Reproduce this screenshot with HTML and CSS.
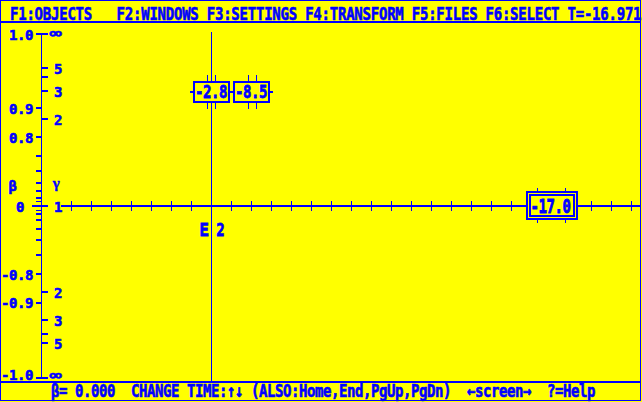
FILE: index.html
```html
<!DOCTYPE html>
<html>
<head>
<meta charset="utf-8">
<link rel="stylesheet" href="styles.css">
</head>
<body>
<div class="screen">
  <header class="menu"><span class="menu-text">F1:OBJECTS   F2:WINDOWS F3:SETTINGS F4:TRANSFORM F5:FILES F6:SELECT T=-16.971</span></header>
  <main class="plot">
    <svg class="canvas" width="639" height="358" viewBox="1 23 639 358" shape-rendering="crispEdges">
      <g class="ink">
        <!-- beta / gamma axis -->
        <rect x="41" y="33" width="1" height="346"/>
        <rect x="36" y="33" width="12" height="2"/>
        <rect x="36" y="377" width="12" height="2"/>
        <!-- beta ticks (left) -->
        <rect x="36" y="107" width="5" height="2"/>
        <rect x="36" y="136" width="5" height="2"/>
        <rect x="36" y="155" width="5" height="2"/>
        <rect x="36" y="170" width="5" height="2"/>
        <rect x="36" y="182" width="5" height="2"/>
        <rect x="36" y="190" width="5" height="2"/>
        <rect x="36" y="197" width="5" height="2"/>
        <rect x="36" y="201" width="5" height="1"/>
        <rect x="36" y="210" width="5" height="1"/>
        <rect x="36" y="213" width="5" height="2"/>
        <rect x="36" y="219" width="5" height="2"/>
        <rect x="36" y="228" width="5" height="2"/>
        <rect x="36" y="239" width="5" height="2"/>
        <rect x="36" y="254" width="5" height="2"/>
        <rect x="36" y="273" width="5" height="2"/>
        <rect x="36" y="302" width="5" height="2"/>
        <!-- gamma ticks (right) -->
        <rect x="42" y="67" width="6" height="2"/>
        <rect x="42" y="76" width="6" height="2"/>
        <rect x="42" y="90" width="6" height="2"/>
        <rect x="42" y="118" width="6" height="2"/>
        <rect x="42" y="291" width="6" height="2"/>
        <rect x="42" y="319" width="6" height="2"/>
        <rect x="42" y="333" width="6" height="2"/>
        <rect x="42" y="342" width="6" height="2"/>
        <!-- x axis -->
        <rect x="32" y="205" width="16" height="2"/>
        <rect x="61" y="205" width="579" height="2"/>
        <path class="ticks" d="M71.5 201V211M91.5 201V211M111.5 201V211M131.5 201V211M151.5 201V211M171.5 201V211M191.5 201V211M211.5 201V211M231.5 201V211M251.5 201V211M271.5 201V211M291.5 201V211M311.5 201V211M331.5 201V211M351.5 201V211M371.5 201V211M391.5 201V211M411.5 201V211M431.5 201V211M451.5 201V211M471.5 201V211M491.5 201V211M511.5 201V211M531.5 201V211M551.5 201V211M571.5 201V211M591.5 201V211M611.5 201V211M631.5 201V211"/>
        <!-- world line -->
        <rect x="211" y="32" width="1" height="349"/>
        <!-- event line & boxes -->
        <rect x="190" y="91" width="83" height="2"/>
        <rect x="207" y="75" width="1" height="6"/>
        <rect x="215" y="75" width="1" height="6"/>
        <rect x="207" y="103" width="1" height="6"/>
        <rect x="215" y="103" width="1" height="6"/>
        <rect x="248" y="75" width="1" height="6"/>
        <rect x="256" y="75" width="1" height="6"/>
        <rect x="248" y="103" width="1" height="6"/>
        <rect x="256" y="103" width="1" height="6"/>
        <rect x="193" y="81" width="37" height="22"/>
        <rect class="bg" x="195" y="83" width="33" height="18"/>
        <rect x="233" y="81" width="37" height="22"/>
        <rect class="bg" x="235" y="83" width="33" height="18"/>
        <rect x="537" y="188" width="1" height="3"/>
        <rect x="565" y="188" width="1" height="3"/>
        <rect x="537" y="220" width="1" height="3"/>
        <rect x="565" y="220" width="1" height="3"/>
        <rect x="526" y="191" width="52" height="29"/>
        <rect class="bg" x="528" y="193" width="48" height="25"/>
        <rect x="529" y="194" width="46" height="23"/>
        <rect class="bg" x="531" y="196" width="42" height="19"/>
      </g>
      <g class="labels">
        <text x="33" y="40" text-anchor="end">1.0</text>
        <text x="33" y="113.5" text-anchor="end">0.9</text>
        <text x="33" y="142.5" text-anchor="end">0.8</text>
        <text x="33" y="279.5" text-anchor="end">-0.8</text>
        <text x="33" y="308" text-anchor="end">-0.9</text>
        <text x="33" y="380" text-anchor="end">-1.0</text>
        <text x="12.5" y="191" text-anchor="middle">β</text>
        <text x="20" y="211.5" text-anchor="middle">0</text>
        <text class="inf" x="55.5" y="38.5" text-anchor="middle">∞</text>
        <text x="58" y="73.5" text-anchor="middle">5</text>
        <text x="58" y="96.5" text-anchor="middle">3</text>
        <text x="58" y="125" text-anchor="middle">2</text>
        <text class="gamma" x="56" y="188" text-anchor="middle">γ</text>
        <text x="58" y="211.5" text-anchor="middle">1</text>
        <text x="58" y="297.5" text-anchor="middle">2</text>
        <text x="58" y="325.5" text-anchor="middle">3</text>
        <text x="58" y="349" text-anchor="middle">5</text>
        <text class="inf" x="55.5" y="380.5" text-anchor="middle">∞</text>
        <text class="tall" x="211" y="97" text-anchor="middle">-2.8</text>
        <text class="tall" x="251" y="97" text-anchor="middle">-8.5</text>
        <text class="tall big" x="550.5" y="210.5" text-anchor="middle">-17.0</text>
        <text class="tall" x="212" y="235" text-anchor="middle"><tspan class="serif">E</tspan> 2</text>
      </g>
    </svg>
  </main>
  <footer class="status"><span class="status-text">β= 0.000  CHANGE TIME:↑↓ (ALSO:Home,End,PgUp,PgDn)  ←screen→  ?=Help</span></footer>
</div>
</body>
</html>
```
FILE: styles.css
```css
html, body {
  margin: 0;
  padding: 0;
  background: #ffff00;
}
body {
  width: 642px;
  height: 402px;
  overflow: hidden;
  font-family: "DejaVu Sans Mono", monospace;
  font-weight: bold;
  color: #0000ff;
}
.screen {
  width: 641px;
  height: 401px;
  box-sizing: border-box;
  border: 1px solid #0000ff;
  display: flex;
  flex-direction: column;
}
.menu {
  flex: none;
  height: 20px;
  min-height: 0;
  border-bottom: 2px solid #0000ff;
  padding-left: 9px;
  display: flex;
  align-items: flex-start;
}
.menu-text {
  display: inline-block;
  white-space: pre;
  font-size: 14px;
  line-height: 28px;
  letter-spacing: -0.23px;
  -webkit-text-stroke: 0.5px #0000ff;
  transform: scaleY(1.25);
  transform-origin: 0 18.85px;
}
.plot {
  flex: 1 1 auto;
  min-height: 0;
}
.canvas {
  display: block;
}
.ink rect, .ink path {
  fill: #0000ff;
}
.ink .bg {
  fill: #ffff00;
}
.ink .ticks {
  fill: none;
  stroke: #0000ff;
  stroke-width: 1;
}
.labels text {
  font-family: "DejaVu Sans Mono", monospace;
  font-weight: bold;
  font-size: 14px;
  letter-spacing: -0.43px;
  fill: #0000ff;
  stroke: #0000ff;
  stroke-width: 0.6px;
  shape-rendering: auto;
}
.labels .inf {
  font-size: 14px;
  stroke-width: 0.5px;
  transform-box: fill-box;
  transform-origin: center;
  transform: scaleX(1.45);
}
.labels .gamma {
  font-family: "Liberation Serif", serif;
  font-size: 15px;
  stroke-width: 0.4px;
}
.labels .serif {
  font-family: "Liberation Mono", monospace;
  font-size: 15px;
}
.labels .tall {
  transform-box: fill-box;
  transform-origin: center;
  transform: scaleY(1.3);
}
.labels .big {
  transform: scaleY(1.45);
}
.status {
  flex: none;
  height: 17px;
  min-height: 0;
  border-top: 2px solid #0000ff;
  padding-left: 50px;
  display: flex;
  align-items: flex-start;
}
.status-text {
  display: inline-block;
  white-space: pre;
  font-size: 14px;
  line-height: 18px;
  letter-spacing: -0.43px;
  -webkit-text-stroke: 0.5px #0000ff;
  transform: scaleY(1.25);
  transform-origin: 0 13.85px;
}
```
